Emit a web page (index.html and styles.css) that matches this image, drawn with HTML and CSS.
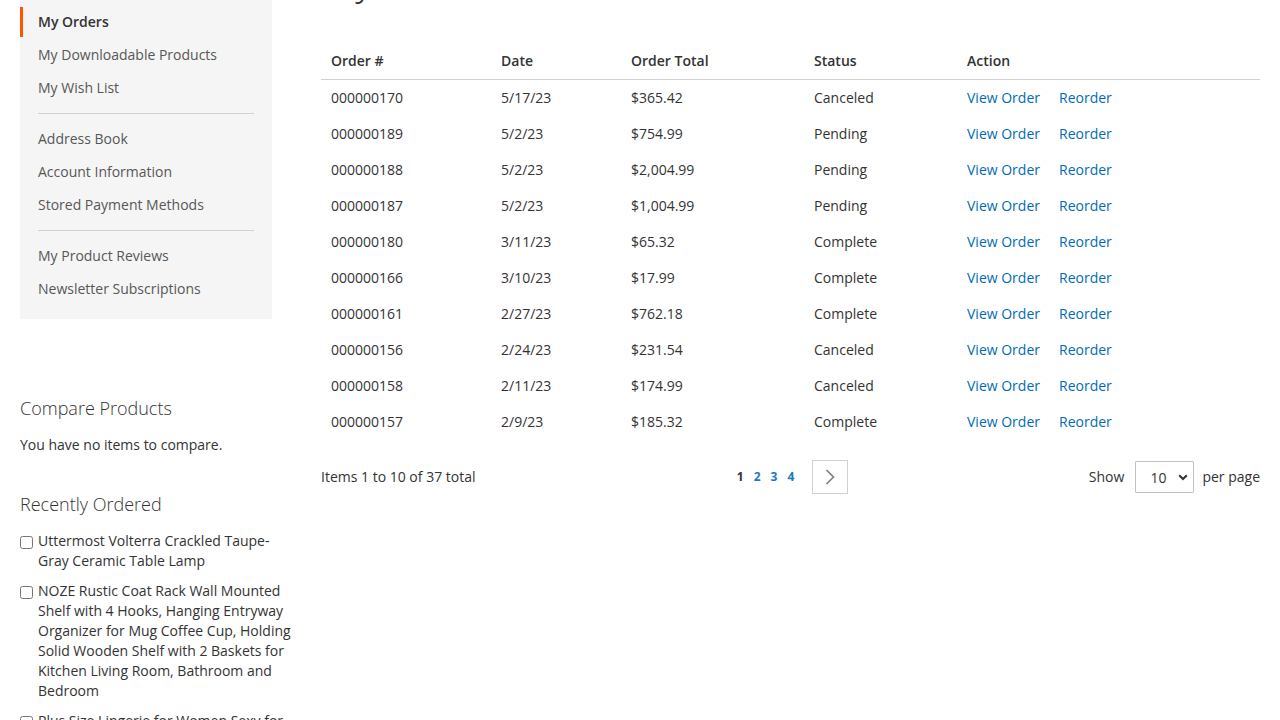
FILE: index.html
```html
<!DOCTYPE html>
<html lang="en">
<head>
<meta charset="utf-8">
<title>My Orders</title>
<link rel="stylesheet" href="styles.css">
</head>
<body>
<div class="page">
  <div class="columns">
    <aside class="sidebar">
      <nav class="account-nav">
        <ul class="nav-list">
          <li class="nav-item current"><strong>My Orders</strong></li>
          <li class="nav-item"><a href="#">My Downloadable Products</a></li>
          <li class="nav-item"><a href="#">My Wish List</a></li>
          <li class="nav-delimiter"></li>
          <li class="nav-item"><a href="#">Address Book</a></li>
          <li class="nav-item"><a href="#">Account Information</a></li>
          <li class="nav-item"><a href="#">Stored Payment Methods</a></li>
          <li class="nav-delimiter"></li>
          <li class="nav-item"><a href="#">My Product Reviews</a></li>
          <li class="nav-item"><a href="#">Newsletter Subscriptions</a></li>
        </ul>
      </nav>

      <div class="block block-compare">
        <div class="block-title">Compare Products</div>
        <div class="block-content">You have no items to compare.</div>
      </div>

      <div class="block block-reorder">
        <div class="block-title">Recently Ordered</div>
        <ol class="reorder-list">
          <li class="reorder-item">
            <input type="checkbox" class="reorder-check">
            <span class="reorder-name">Uttermost Volterra Crackled Taupe-Gray Ceramic Table Lamp</span>
          </li>
          <li class="reorder-item">
            <input type="checkbox" class="reorder-check">
            <span class="reorder-name">NOZE Rustic Coat Rack Wall Mounted Shelf with 4 Hooks, Hanging Entryway Organizer for Mug Coffee Cup, Holding Solid Wooden Shelf with 2 Baskets for Kitchen Living Room, Bathroom and Bedroom</span>
          </li>
          <li class="reorder-item">
            <input type="checkbox" class="reorder-check">
            <span class="reorder-name">Plus Size Lingerie for Women Sexy for Sex Naughty Play Lace Babydoll</span>
          </li>
        </ol>
      </div>
    </aside>

    <main class="main">
      <h1 class="page-title">My Orders</h1>
      <table class="orders">
        <colgroup>
          <col class="c-id"><col class="c-date"><col class="c-total"><col class="c-status"><col class="c-action">
        </colgroup>
        <thead>
          <tr><th>Order #</th><th>Date</th><th>Order Total</th><th>Status</th><th>Action</th></tr>
        </thead>
        <tbody>
          <tr><td>000000170</td><td>5/17/23</td><td>$365.42</td><td>Canceled</td><td><a class="act" href="#">View Order</a><a class="act" href="#">Reorder</a></td></tr>
          <tr><td>000000189</td><td>5/2/23</td><td>$754.99</td><td>Pending</td><td><a class="act" href="#">View Order</a><a class="act" href="#">Reorder</a></td></tr>
          <tr><td>000000188</td><td>5/2/23</td><td>$2,004.99</td><td>Pending</td><td><a class="act" href="#">View Order</a><a class="act" href="#">Reorder</a></td></tr>
          <tr><td>000000187</td><td>5/2/23</td><td>$1,004.99</td><td>Pending</td><td><a class="act" href="#">View Order</a><a class="act" href="#">Reorder</a></td></tr>
          <tr><td>000000180</td><td>3/11/23</td><td>$65.32</td><td>Complete</td><td><a class="act" href="#">View Order</a><a class="act" href="#">Reorder</a></td></tr>
          <tr><td>000000166</td><td>3/10/23</td><td>$17.99</td><td>Complete</td><td><a class="act" href="#">View Order</a><a class="act" href="#">Reorder</a></td></tr>
          <tr><td>000000161</td><td>2/27/23</td><td>$762.18</td><td>Complete</td><td><a class="act" href="#">View Order</a><a class="act" href="#">Reorder</a></td></tr>
          <tr><td>000000156</td><td>2/24/23</td><td>$231.54</td><td>Canceled</td><td><a class="act" href="#">View Order</a><a class="act" href="#">Reorder</a></td></tr>
          <tr><td>000000158</td><td>2/11/23</td><td>$174.99</td><td>Canceled</td><td><a class="act" href="#">View Order</a><a class="act" href="#">Reorder</a></td></tr>
          <tr><td>000000157</td><td>2/9/23</td><td>$185.32</td><td>Complete</td><td><a class="act" href="#">View Order</a><a class="act" href="#">Reorder</a></td></tr>
        </tbody>
      </table>

      <div class="toolbar">
        <p class="amount">Items 1 to 10 of 37 total</p>
        <ul class="pages">
          <li class="page-item current">1</li>
          <li class="page-item"><a href="#">2</a></li>
          <li class="page-item"><a href="#">3</a></li>
          <li class="page-item"><a href="#">4</a></li>
          <li class="page-next"><a href="#" class="next-btn" aria-label="Next">
            <svg width="10" height="16" viewBox="0 0 10 16"><polyline points="1.5,1 8.5,8 1.5,15" fill="none" stroke="#7d7d7d" stroke-width="1.6"/></svg>
          </a></li>
        </ul>
        <div class="limiter">
          <span class="limiter-label">Show</span>
          <span class="select-wrap">
            <select class="limiter-select"><option>10</option><option>20</option><option>50</option></select>
            <svg class="select-arrow" width="10" height="7" viewBox="0 0 10 7"><polyline points="1.2,1.2 5,5 8.8,1.2" fill="none" stroke="#333" stroke-width="2"/></svg>
          </span>
          <span class="limiter-text">per page</span>
        </div>
      </div>
    </main>
  </div>
</div>
</body>
</html>
```

FILE: styles.css
```css
html, body {
  margin: 0;
  padding: 0;
  background: #fff;
  overflow: hidden;
}
body {
  font-family: "Open Sans", "Liberation Sans", sans-serif;
  font-size: 14px;
  line-height: 20px;
  color: #333;
}
a { text-decoration: none; }

.page {
  padding: 0 20px;
}
.columns {
  display: flex;
  align-items: flex-start;
  margin-top: -43px;
}

/* sidebar */
.sidebar {
  width: 272px;
  flex: none;
  padding-top: 35px;
}
.account-nav {
  width: 252px;
  background: #f5f5f5;
  padding: 15px 0;
}
.nav-list {
  list-style: none;
  margin: 0;
  padding: 0;
}
.nav-item {
  margin: 3px 0 0;
}
.nav-item:first-child { margin-top: 0; }
.nav-item a,
.nav-item strong {
  display: block;
  padding: 5px 18px 5px 15px;
  border-left: 3px solid transparent;
  color: #575757;
  font-weight: 400;
}
.nav-item.current strong {
  border-left-color: #ff5501;
  color: #333;
  font-weight: 600;
}
.nav-delimiter {
  border-top: 1px solid #d1d1d1;
  margin: 10px 18px;
}

.block-compare { margin-top: 78px; }
.block-reorder { margin-top: 38px; }
.block-title {
  font-size: 18px;
  font-weight: 300;
  line-height: 22px;
  margin-bottom: 16px;
}
.block-content { margin: 0; }

.reorder-list {
  list-style: none;
  margin: 0;
  padding: 0;
}
.reorder-item {
  display: flex;
  align-items: flex-start;
  margin-bottom: 10px;
}
.reorder-check {
  flex: none;
  width: 13px;
  height: 13px;
  margin: 5px 5px 0 0;
}
.reorder-name {
  width: 256px;
}

/* main */
.main {
  flex: 1;
  margin-left: 29px;
  min-width: 0;
}
.page-title {
  margin: 0 0 42px;
  font-size: 40px;
  line-height: 44px;
  font-weight: 300;
  color: #333;
}

.orders {
  width: 100%;
  border-collapse: collapse;
  table-layout: fixed;
}
.c-id { width: 170px; }
.c-date { width: 130px; }
.c-total { width: 183px; }
.c-status { width: 153px; }
.orders th,
.orders td {
  text-align: left;
  padding: 8px 10px;
  vertical-align: top;
}
.orders th {
  font-weight: 600;
  border-bottom: 1px solid #d1d1d1;
}
.act {
  color: #006bb4;
  margin-right: 19px;
}

/* toolbar */
.toolbar {
  margin-top: 20px;
  display: grid;
  grid-template-columns: 1fr auto 1fr;
  align-items: center;
}
.amount { margin: 0; }
.pages {
  list-style: none;
  margin: 0;
  padding: 0;
  display: flex;
  align-items: center;
  font-size: 12px;
  font-weight: 700;
}
.page-item {
  padding: 0 4px;
  margin-right: 2px;
  color: #333;
}
.page-item a { color: #1979c3; }
.page-next { margin-left: 12px; }
.next-btn {
  box-sizing: border-box;
  width: 36px;
  height: 34px;
  border: 1px solid #d1d1d1;
  display: flex;
  align-items: center;
  justify-content: center;
}
.limiter {
  justify-self: end;
  display: flex;
  align-items: center;
}
.limiter-label { margin-right: 11px; }
.limiter-text { margin-left: 8px; }
.select-wrap {
  position: relative;
  display: inline-block;
}
.limiter-select {
  -webkit-appearance: none;
  appearance: none;
  box-sizing: border-box;
  width: 59px;
  height: 32px;
  border: 1px solid #c2c2c2;
  border-radius: 1px;
  background: #fff;
  font-family: "Open Sans", "Liberation Sans", sans-serif;
  font-size: 14px;
  color: #333;
  padding: 0 0 0 14px;
  display: block;
}
.select-arrow {
  position: absolute;
  right: 6px;
  top: 13px;
  pointer-events: none;
}
```
